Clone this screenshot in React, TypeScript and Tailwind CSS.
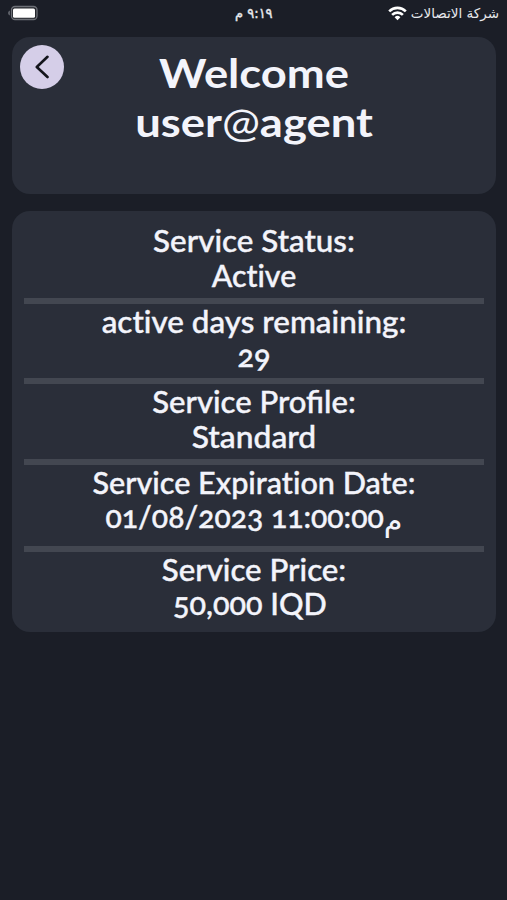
import React from 'react';
import clsx from 'clsx';

type Row = {
  label: string;
  value: React.ReactNode;
  labelClass: string;
  valueClass: string;
  rowClass: string;
};

const rows: Row[] = [
  {
    label: 'Service Status:',
    value: 'Active',
    labelClass: 'scale-x-[1.045]',
    valueClass: 'scale-x-[1.01] pt-px',
    rowClass: 'h-[93px] border-b-6 pt-[12px]',
  },
  {
    label: 'active days remaining:',
    value: '29',
    labelClass: 'scale-x-[1.047]',
    valueClass: 'scale-x-[1.02]',
    rowClass: 'h-[80px] border-b-6',
  },
  {
    label: 'Service Profile:',
    value: 'Standard',
    labelClass: "scale-x-[1.035] [font-feature-settings:'onum','liga']",
    valueClass: 'scale-x-[1.06] pt-px',
    rowClass: 'h-[81px] border-b-6',
  },
  {
    label: 'Service Expiration Date:',
    value: (
      <>
        01/08/2023 11:00:00
        <span className="relative top-[3px] inline-block h-6 font-['DejaVu_Sans',sans-serif] text-[30px] leading-6 font-normal [-webkit-text-stroke:0]">
          م
        </span>
      </>
    ),
    labelClass: 'scale-x-[1.02]',
    valueClass: 'scale-x-[1.005]',
    rowClass: 'h-[87px] border-b-6',
  },
  {
    label: 'Service Price:',
    value: '50,000 IQD',
    labelClass: 'scale-x-[1.04]',
    valueClass: 'scale-x-[1.02] pr-2',
    rowClass: 'h-[80px]',
  },
];

const StatusBar: React.FC = () => (
  <div className="grid h-[37px] grid-cols-3 items-start px-2 pt-[5px] text-[#e8e9ed]">
    <svg width="31" height="16" viewBox="0 0 31 16">
      <path d="M2 5.5v5C.6 10 0 9 0 8s.6-2 2-2.500Z" fill="#5d6068" />
      <rect x="3.500" y="1.500" width="25.500" height="13" rx="3.500" fill="#25272d" stroke="#6d7077" strokeWidth="1.300" />
      <rect x="5" y="3.500" width="22" height="9.300" rx="1.500" fill="#fff" />
    </svg>
    <span
      dir="rtl"
      className="scale-x-[0.93] text-center font-['DejaVu_Sans',sans-serif] text-[14px] leading-4 whitespace-nowrap [-webkit-text-stroke:0.4px]"
    >
      ٩:١٩ م
    </span>
    <div className="flex items-start justify-end gap-[4px]">
      <svg className="mt-px" width="19" height="15" viewBox="0 0 19 15" fill="none" stroke="#fff" strokeWidth="2.600">
        <path d="M1.200 5.300a11.700 11.700 0 0 1 16.600 0" />
        <path d="M4.100 8.900a7.600 7.600 0 0 1 10.800 0" />
        <path d="M9.500 14.200 6.600 11.300a4.100 4.100 0 0 1 5.800 0Z" fill="#fff" stroke="none" />
      </svg>
      <span dir="rtl" className="font-['DejaVu_Sans',sans-serif] text-[13.5px] leading-4 whitespace-nowrap">
        شركة الاتصالات
      </span>
    </div>
  </div>
);

const WelcomeCard: React.FC = () => (
  <header className="relative mx-3 h-[157px] w-[484px] rounded-[18px] bg-[#2a2e39] pt-[11px] text-center">
    <button
      aria-label="Back"
      className="absolute top-[8px] left-[8px] flex size-11 items-center justify-center rounded-full bg-[#d5cee8]"
    >
      <svg width="14" height="24" viewBox="0 0 14 24" fill="none" stroke="#14151c" strokeWidth="2.600">
        <path d="M12.500 1.800 1.800 12 12.500 22" strokeLinecap="round" strokeLinejoin="round" />
      </svg>
    </button>
    <h1 className="text-[41px] leading-[49px] font-bold">
      <span className="block scale-x-[1.105]">Welcome</span>
      <span className="block scale-x-[1.107]">
        user<span className="font-normal">@</span>agent
      </span>
    </h1>
  </header>
);

const ServiceCard: React.FC = () => (
  <section className="mx-3 mt-[17px] h-[421px] w-[484px] rounded-[18px] bg-[#2a2e39] px-3 text-center">
    {rows.map(({ label, value, labelClass, valueClass, rowClass }) => (
      <div
        key={label}
        className={clsx(
          'border-[#434751] text-[30px] leading-[34px] font-medium whitespace-nowrap [-webkit-text-stroke:0.4px]',
          rowClass,
        )}
      >
        <div className={labelClass}>{label}</div>
        <div className={clsx('h-[34px]', valueClass)}>{value}</div>
      </div>
    ))}
  </section>
);

const App: React.FC = () => (
  <main className="h-[900px] w-[507px] overflow-hidden bg-[#1b1e27] font-[Lato,sans-serif] text-[#f3f4fb] [font-feature-settings:'onum','liga'_0]">
    <StatusBar />
    <WelcomeCard />
    <ServiceCard />
  </main>
);

export default App;
